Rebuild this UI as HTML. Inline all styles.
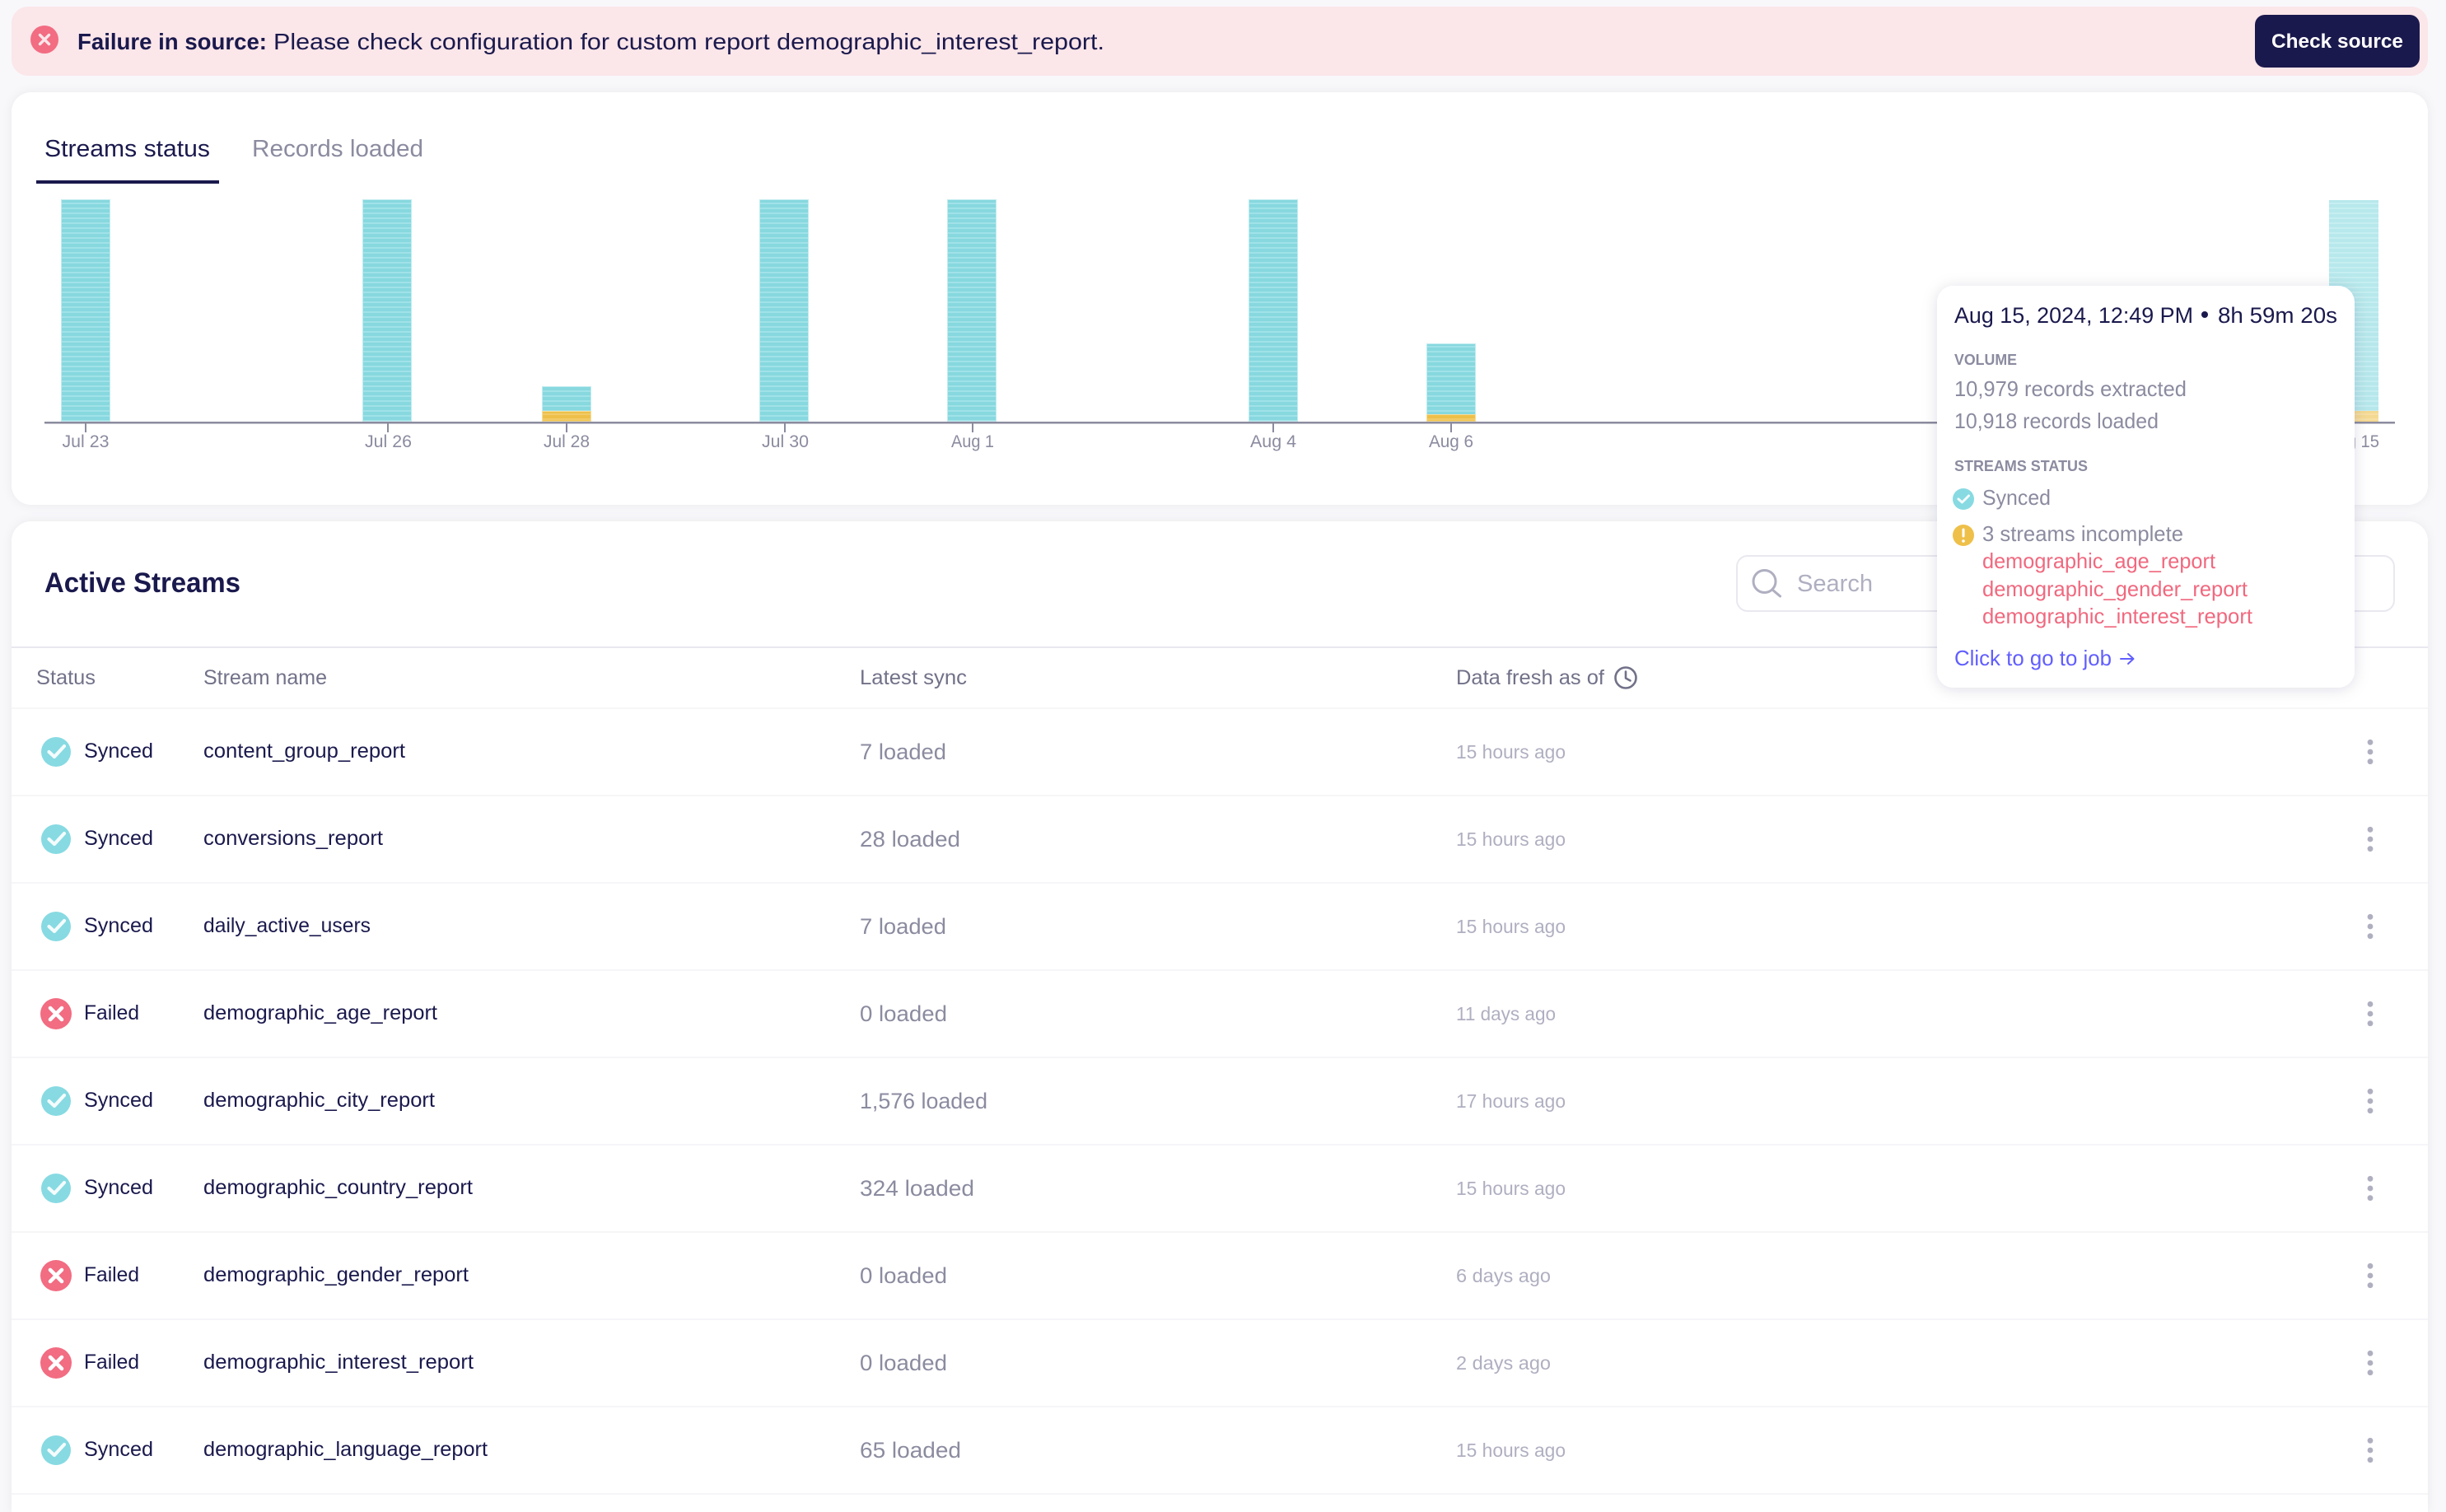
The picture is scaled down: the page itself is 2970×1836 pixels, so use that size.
<!DOCTYPE html>
<html lang="en">
<head>
<meta charset="utf-8">
<title>Streams status</title>
<style>
html,body{margin:0;padding:0;background:#f8f8fb;width:2970px;height:1836px;overflow:hidden}
svg{display:block;font-family:"Liberation Sans",Arial,sans-serif}
.d{fill:#1a194d}
.n{font-size:25px;fill:#1a194d}
.h{font-size:25px;fill:#717189}
.l{font-size:27px;fill:#8b8ba0}
.a{font-size:23px;fill:#afafc1}
.x{font-size:21px;fill:#8b8ba0}
.s{font-size:18px;font-weight:bold;fill:#8b8ba0}
.t{font-size:26px;fill:#8b8ba0}
.r{font-size:26px;fill:#f0697f}
</style>
</head>
<body>
<svg width="2970" height="1836" viewBox="0 0 2970 1836" xmlns="http://www.w3.org/2000/svg">
<defs>
<pattern id="c" width="60" height="6" patternUnits="userSpaceOnUse" y="242">
<rect width="60" height="6" fill="#87d8df"/><rect y="4" width="60" height="2" fill="#a0e2e8"/>
</pattern>
<pattern id="y" width="60" height="6" patternUnits="userSpaceOnUse">
<rect width="60" height="6" fill="#eec04a"/><rect y="4" width="60" height="2" fill="#f2cb69"/>
</pattern>
<filter id="cs" x="-3%" y="-5%" width="106%" height="110%"><feDropShadow dx="0" dy="0" stdDeviation="6" flood-color="#1a194d" flood-opacity=".06"/></filter>
<filter id="ts" x="-10%" y="-10%" width="120%" height="120%"><feDropShadow dx="0" dy="2" stdDeviation="9" flood-color="#1a194d" flood-opacity=".13"/></filter>
<g id="ok"><circle r="18" fill="#87dae2"/><path d="M-8.5 0L-2 6L10-7" fill="none" stroke="#f4fcfd" stroke-width="4.2" stroke-linecap="round" stroke-linejoin="round"/></g>
<g id="bad"><circle r="19" fill="#f26c82"/><path d="M-7-7L7 7M7-7L-7 7" fill="none" stroke="#fff" stroke-width="4.6" stroke-linecap="round"/></g>
<g id="dots" fill="#afafc1"><circle cy="-11.7" r="3.4"/><circle r="3.4"/><circle cy="11.7" r="3.4"/></g>
</defs>

<!-- banner -->
<rect x="14" y="8" width="2934" height="84" rx="20" fill="#fbe6e9"/>
<circle cx="54" cy="48" r="17" fill="#f26c82"/>
<path d="M48.5 42.5L59.500 53.500M59.500 42.500L48.500 53.500" stroke="#fbe6e9" stroke-width="3.400" stroke-linecap="round"/>
<text x="94" y="60" font-size="28" font-weight="bold" class="d" textLength="230" lengthAdjust="spacingAndGlyphs">Failure in source:</text>
<text x="332" y="60" font-size="28" class="d" textLength="1009" lengthAdjust="spacingAndGlyphs">Please check configuration for custom report demographic_interest_report.</text>
<rect x="2738" y="18" width="200" height="64" rx="12" fill="#1a194d"/>
<text x="2758" y="58" font-size="24" font-weight="bold" fill="#fff" textLength="160" lengthAdjust="spacingAndGlyphs">Check source</text>

<!-- chart card -->
<rect x="14" y="112" width="2934" height="501" rx="24" fill="#fff" filter="url(#cs)"/>
<text x="54" y="190" font-size="29" class="d" textLength="201" lengthAdjust="spacingAndGlyphs">Streams status</text>
<text x="306" y="190" font-size="29" fill="#8b8ba0" textLength="208" lengthAdjust="spacingAndGlyphs">Records loaded</text>
<rect x="44" y="219" width="222" height="4" fill="#1a194d"/>

<g stroke="#c2ecef" stroke-width="1">
<rect x="74.500" y="242.500" width="59" height="269" fill="url(#c)"/>
<rect x="440.500" y="242.500" width="59" height="269" fill="url(#c)"/>
<rect x="658.500" y="469.500" width="59" height="30" fill="url(#c)"/>
<rect x="922.500" y="242.500" width="59" height="269" fill="url(#c)"/>
<rect x="1150.500" y="242.500" width="59" height="269" fill="url(#c)"/>
<rect x="1516.500" y="242.500" width="59" height="269" fill="url(#c)"/>
<rect x="1732.500" y="417.500" width="59" height="86" fill="url(#c)"/>
</g>
<g stroke="#f6dd9d" stroke-width="1">
<rect x="658.500" y="499.500" width="59" height="12" fill="url(#y)"/>
<rect x="1732.500" y="503.500" width="59" height="8" fill="url(#y)"/>
</g>
<g opacity=".6">
<rect x="2828" y="243" width="60" height="256" fill="url(#c)"/>
<rect x="2828" y="499" width="60" height="13" fill="url(#y)"/>
</g>
<rect x="54" y="512" width="2854" height="2.500" fill="#8b8b9f"/>
<g fill="#8b8b9f">
<rect x="103" y="514" width="2" height="11"/><rect x="470" y="514" width="2" height="11"/><rect x="687" y="514" width="2" height="11"/><rect x="952" y="514" width="2" height="11"/><rect x="1180" y="514" width="2" height="11"/><rect x="1545" y="514" width="2" height="11"/><rect x="1761" y="514" width="2" height="11"/><rect x="2857" y="514" width="2" height="11"/>
</g>
<text x="75.500" y="543" class="x" textLength="57" lengthAdjust="spacingAndGlyphs">Jul 23</text>
<text x="443" y="543" class="x" textLength="57" lengthAdjust="spacingAndGlyphs">Jul 26</text>
<text x="660" y="543" class="x" textLength="56" lengthAdjust="spacingAndGlyphs">Jul 28</text>
<text x="925" y="543" class="x" textLength="57" lengthAdjust="spacingAndGlyphs">Jul 30</text>
<text x="1155" y="543" class="x" textLength="52" lengthAdjust="spacingAndGlyphs">Aug 1</text>
<text x="1518" y="543" class="x" textLength="56" lengthAdjust="spacingAndGlyphs">Aug 4</text>
<text x="1735" y="543" class="x" textLength="54" lengthAdjust="spacingAndGlyphs">Aug 6</text>
<text x="2825" y="543" class="x" textLength="64" lengthAdjust="spacingAndGlyphs">Aug 15</text>

<!-- table card -->
<path d="M14 1836V657a24 24 0 0 1 24-24H2924a24 24 0 0 1 24 24V1836Z" fill="#fff" filter="url(#cs)"/>
<text x="54" y="719" font-size="34" font-weight="bold" class="d" textLength="238" lengthAdjust="spacingAndGlyphs">Active Streams</text>
<rect x="2109" y="675" width="798" height="67" rx="13" fill="#fff" stroke="#e8e8f0" stroke-width="2"/>
<circle cx="2142.500" cy="706" r="13.500" fill="none" stroke="#afafc1" stroke-width="3"/>
<path d="M2152 716L2161.500 724" stroke="#afafc1" stroke-width="3" stroke-linecap="round"/>
<text x="2182" y="718" font-size="29" fill="#afafc1" textLength="92" lengthAdjust="spacingAndGlyphs">Search</text>
<rect x="14" y="785" width="2934" height="2" fill="#e8e8f0"/>

<text x="44" y="831" class="h" textLength="72" lengthAdjust="spacingAndGlyphs">Status</text>
<text x="247" y="831" class="h" textLength="150" lengthAdjust="spacingAndGlyphs">Stream name</text>
<text x="1044" y="831" class="h" textLength="130" lengthAdjust="spacingAndGlyphs">Latest sync</text>
<text x="1768" y="831" class="h" textLength="180" lengthAdjust="spacingAndGlyphs">Data fresh as of</text>
<circle cx="1974" cy="823" r="12.500" fill="none" stroke="#717189" stroke-width="2.600"/>
<path d="M1974 815.500V823.500L1979.500 826.500" fill="none" stroke="#717189" stroke-width="2.600" stroke-linecap="round" stroke-linejoin="round"/>

<g fill="#f6f6f9">
<rect x="14" y="859" width="2934" height="2"/><rect x="14" y="965" width="2934" height="2"/><rect x="14" y="1071" width="2934" height="2"/><rect x="14" y="1177" width="2934" height="2"/><rect x="14" y="1283" width="2934" height="2"/><rect x="14" y="1389" width="2934" height="2"/><rect x="14" y="1495" width="2934" height="2"/><rect x="14" y="1601" width="2934" height="2"/><rect x="14" y="1707" width="2934" height="2"/><rect x="14" y="1813" width="2934" height="2"/>
</g>

<!-- rows -->
<use href="#ok" x="68" y="913"/><text x="102" y="920" class="n" textLength="84" lengthAdjust="spacingAndGlyphs">Synced</text><text x="247" y="920" class="n" textLength="245" lengthAdjust="spacingAndGlyphs">content_group_report</text><text x="1044" y="922" class="l" textLength="105" lengthAdjust="spacingAndGlyphs">7 loaded</text><text x="1768" y="921" class="a" textLength="133" lengthAdjust="spacingAndGlyphs">15 hours ago</text><use href="#dots" x="2878" y="913"/>

<use href="#ok" x="68" y="1019"/><text x="102" y="1026" class="n" textLength="84" lengthAdjust="spacingAndGlyphs">Synced</text><text x="247" y="1026" class="n" textLength="218" lengthAdjust="spacingAndGlyphs">conversions_report</text><text x="1044" y="1028" class="l" textLength="122" lengthAdjust="spacingAndGlyphs">28 loaded</text><text x="1768" y="1027" class="a" textLength="133" lengthAdjust="spacingAndGlyphs">15 hours ago</text><use href="#dots" x="2878" y="1019"/>

<use href="#ok" x="68" y="1125"/><text x="102" y="1132" class="n" textLength="84" lengthAdjust="spacingAndGlyphs">Synced</text><text x="247" y="1132" class="n" textLength="203" lengthAdjust="spacingAndGlyphs">daily_active_users</text><text x="1044" y="1134" class="l" textLength="105" lengthAdjust="spacingAndGlyphs">7 loaded</text><text x="1768" y="1133" class="a" textLength="133" lengthAdjust="spacingAndGlyphs">15 hours ago</text><use href="#dots" x="2878" y="1125"/>

<use href="#bad" x="68" y="1231"/><text x="102" y="1238" class="n" textLength="67" lengthAdjust="spacingAndGlyphs">Failed</text><text x="247" y="1238" class="n" textLength="284" lengthAdjust="spacingAndGlyphs">demographic_age_report</text><text x="1044" y="1240" class="l" textLength="106" lengthAdjust="spacingAndGlyphs">0 loaded</text><text x="1768" y="1239" class="a" textLength="121" lengthAdjust="spacingAndGlyphs">11 days ago</text><use href="#dots" x="2878" y="1231"/>

<use href="#ok" x="68" y="1337"/><text x="102" y="1344" class="n" textLength="84" lengthAdjust="spacingAndGlyphs">Synced</text><text x="247" y="1344" class="n" textLength="281" lengthAdjust="spacingAndGlyphs">demographic_city_report</text><text x="1044" y="1346" class="l" textLength="155" lengthAdjust="spacingAndGlyphs">1,576 loaded</text><text x="1768" y="1345" class="a" textLength="133" lengthAdjust="spacingAndGlyphs">17 hours ago</text><use href="#dots" x="2878" y="1337"/>

<use href="#ok" x="68" y="1443"/><text x="102" y="1450" class="n" textLength="84" lengthAdjust="spacingAndGlyphs">Synced</text><text x="247" y="1450" class="n" textLength="327" lengthAdjust="spacingAndGlyphs">demographic_country_report</text><text x="1044" y="1452" class="l" textLength="139" lengthAdjust="spacingAndGlyphs">324 loaded</text><text x="1768" y="1451" class="a" textLength="133" lengthAdjust="spacingAndGlyphs">15 hours ago</text><use href="#dots" x="2878" y="1443"/>

<use href="#bad" x="68" y="1549"/><text x="102" y="1556" class="n" textLength="67" lengthAdjust="spacingAndGlyphs">Failed</text><text x="247" y="1556" class="n" textLength="322" lengthAdjust="spacingAndGlyphs">demographic_gender_report</text><text x="1044" y="1558" class="l" textLength="106" lengthAdjust="spacingAndGlyphs">0 loaded</text><text x="1768" y="1557" class="a" textLength="115" lengthAdjust="spacingAndGlyphs">6 days ago</text><use href="#dots" x="2878" y="1549"/>

<use href="#bad" x="68" y="1655"/><text x="102" y="1662" class="n" textLength="67" lengthAdjust="spacingAndGlyphs">Failed</text><text x="247" y="1662" class="n" textLength="328" lengthAdjust="spacingAndGlyphs">demographic_interest_report</text><text x="1044" y="1664" class="l" textLength="106" lengthAdjust="spacingAndGlyphs">0 loaded</text><text x="1768" y="1663" class="a" textLength="115" lengthAdjust="spacingAndGlyphs">2 days ago</text><use href="#dots" x="2878" y="1655"/>

<use href="#ok" x="68" y="1761"/><text x="102" y="1768" class="n" textLength="84" lengthAdjust="spacingAndGlyphs">Synced</text><text x="247" y="1768" class="n" textLength="345" lengthAdjust="spacingAndGlyphs">demographic_language_report</text><text x="1044" y="1770" class="l" textLength="123" lengthAdjust="spacingAndGlyphs">65 loaded</text><text x="1768" y="1769" class="a" textLength="133" lengthAdjust="spacingAndGlyphs">15 hours ago</text><use href="#dots" x="2878" y="1761"/>

<!-- tooltip -->
<rect x="2352" y="347" width="507" height="488" rx="20" fill="#fff" filter="url(#ts)"/>
<text x="2373" y="392" font-size="27" class="d" textLength="290" lengthAdjust="spacingAndGlyphs">Aug 15, 2024, 12:49 PM</text>
<circle cx="2677" cy="382" r="4" fill="#1a194d"/>
<text x="2693" y="392" font-size="27" class="d" textLength="145" lengthAdjust="spacingAndGlyphs">8h 59m 20s</text>
<text x="2373" y="443" class="s" textLength="76" lengthAdjust="spacingAndGlyphs">VOLUME</text>
<text x="2373" y="481" class="t" textLength="282" lengthAdjust="spacingAndGlyphs">10,979 records extracted</text>
<text x="2373" y="520" class="t" textLength="248" lengthAdjust="spacingAndGlyphs">10,918 records loaded</text>
<text x="2373" y="572" class="s" textLength="162" lengthAdjust="spacingAndGlyphs">STREAMS STATUS</text>
<circle cx="2384" cy="606" r="13" fill="#87dae2"/>
<path d="M2378 606L2382.500 610L2390.500 602" fill="none" stroke="#f4fcfd" stroke-width="3" stroke-linecap="round" stroke-linejoin="round"/>
<text x="2407" y="613" class="t" textLength="83" lengthAdjust="spacingAndGlyphs">Synced</text>
<circle cx="2384" cy="650" r="13" fill="#eec04a"/>
<path d="M2384 643V651" stroke="#fff" stroke-width="3" stroke-linecap="round"/><circle cx="2384" cy="657" r="1.800" fill="#fff"/>
<text x="2407" y="657" class="t" textLength="244" lengthAdjust="spacingAndGlyphs">3 streams incomplete</text>
<text x="2407" y="690" class="r" textLength="283" lengthAdjust="spacingAndGlyphs">demographic_age_report</text>
<text x="2407" y="724" class="r" textLength="322" lengthAdjust="spacingAndGlyphs">demographic_gender_report</text>
<text x="2407" y="757" class="r" textLength="328" lengthAdjust="spacingAndGlyphs">demographic_interest_report</text>
<text x="2373" y="808" font-size="26" fill="#615eff" textLength="191" lengthAdjust="spacingAndGlyphs">Click to go to job</text>
<path d="M2575 800H2590M2584 794L2590.500 800L2584 806" fill="none" stroke="#615eff" stroke-width="2" stroke-linecap="round" stroke-linejoin="round"/>
</svg>
</body>
</html>
